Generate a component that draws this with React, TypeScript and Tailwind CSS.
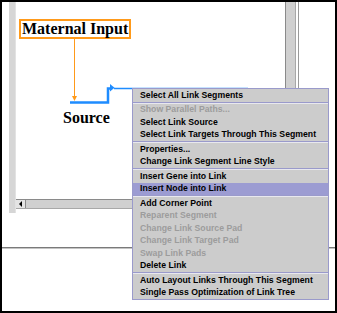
import React from "react";

type Item = { label: string; disabled?: boolean; active?: boolean } | "sep";

const menuItems: Item[] = [
  { label: "Select All Link Segments" },
  "sep",
  { label: "Show Parallel Paths...", disabled: true },
  { label: "Select Link Source" },
  { label: "Select Link Targets Through This Segment" },
  "sep",
  { label: "Properties..." },
  { label: "Change Link Segment Line Style" },
  "sep",
  { label: "Insert Gene into Link" },
  { label: "Insert Node into Link", active: true },
  "sep",
  { label: "Add Corner Point" },
  { label: "Reparent Segment", disabled: true },
  { label: "Change Link Source Pad", disabled: true },
  { label: "Change Link Target Pad", disabled: true },
  { label: "Swap Link Pads", disabled: true },
  { label: "Delete Link" },
  "sep",
  { label: "Auto Layout Links Through This Segment" },
  { label: "Single Pass Optimization of Link Tree" },
];

function PopupMenu() {
  return (
    <div className="absolute left-[130px] top-[86px] w-[197px] border border-[#9a9acb] bg-[#cccccc] font-['Liberation_Sans',Arial,sans-serif] text-[8.7px] font-bold">
      {menuItems.map((item, i) =>
        item === "sep" ? (
          <div key={i} className="h-[2px] border-t border-[#9a9acb] border-b border-b-[#e8e8ee]" />
        ) : (
          <div
            key={i}
            className={`flex h-[12.5px] items-center pl-[7px] whitespace-nowrap ${
              item.active ? "bg-[#9c9cd2]" : ""
            } ${item.disabled ? "text-[#9c9c9c]" : "text-black"}`}
          >
            {item.label}
          </div>
        )
      )}
    </div>
  );
}

function Canvas() {
  return (
    <div className="relative h-[197px] w-[269px] overflow-hidden bg-white">
      <svg className="absolute left-0 top-0" width="269" height="197">
        {/* orange link from Maternal Input */}
        <line x1="58.5" y1="36" x2="58.5" y2="95" stroke="#ff9a1a" strokeWidth="1" />
        <polygon points="56,94 61,94 58.5,99" fill="#ff9a1a" />
        {/* blue link segment */}
        <polyline points="54,100.5 92,100.5 92,86.5 94,86.5" fill="none" stroke="#1e8cff" strokeWidth="2.5" />
        <polygon points="94,82 98.5,85.8 94,89.5" fill="#1e8cff" />
        <line x1="98" y1="86.5" x2="232" y2="86.5" stroke="#1e8cff" strokeWidth="1.5" />
      </svg>
      <div className="absolute left-[3px] top-[17px] border-2 border-[#ff9a1a] bg-white px-[1px] font-['Liberation_Serif','Times_New_Roman',serif] text-[16px] font-bold leading-[16px] text-black whitespace-nowrap">
        Maternal Input
      </div>
      <div className="absolute left-[47px] top-[107.5px] font-['Liberation_Serif','Times_New_Roman',serif] text-[16px] font-bold leading-[16px] text-black">
        Source
      </div>
    </div>
  );
}

export default function App() {
  return (
    <div className="relative flex h-[313px] w-[337px] flex-col overflow-hidden border-2 border-black bg-white">
      {/* upper pane */}
      <div className="flex h-[245px] items-start">
        <div className="w-[7px] shrink-0" />
        <div className="h-[211px] w-[6px] shrink-0 bg-[#d6d6d6] bg-[radial-gradient(#a8a8a8_0.6px,transparent_0.7px)] bg-[length:2px_2px]" />
        <div className="h-[211px] w-[1px] shrink-0 bg-[#e2e2e2]" />
        <div className="flex w-[282px] shrink-0 flex-col">
          <div className="flex">
            <Canvas />
            <div className="h-[197px] w-[11px] border-x border-l-[#8a8a8a] border-r-[#a8a8a8] bg-[#d0d0d0]" />
          </div>
          <div className="flex h-[10px] w-[269px] border-y border-t-[#8a8a8a] border-b-[#a8a8a8] bg-[#d0d0d0]">
            <div className="flex w-[10px] items-center justify-center border-r border-[#8a8a8a] bg-[#e4e4e4]">
              <div className="h-0 w-0 border-y-[3px] border-r-[3px] border-y-transparent border-r-black" />
            </div>
          </div>
        </div>
        <div className="h-[207px] w-[1px] shrink-0 bg-[#9a9a9a]" />
      </div>
      {/* split divider */}
      <div className="h-[2px] border-t border-[#7a7a7a] border-b border-b-[#c4c4c4]" />
      {/* lower pane */}
      <div className="flex-1 bg-white" />
      <PopupMenu />
    </div>
  );
}
